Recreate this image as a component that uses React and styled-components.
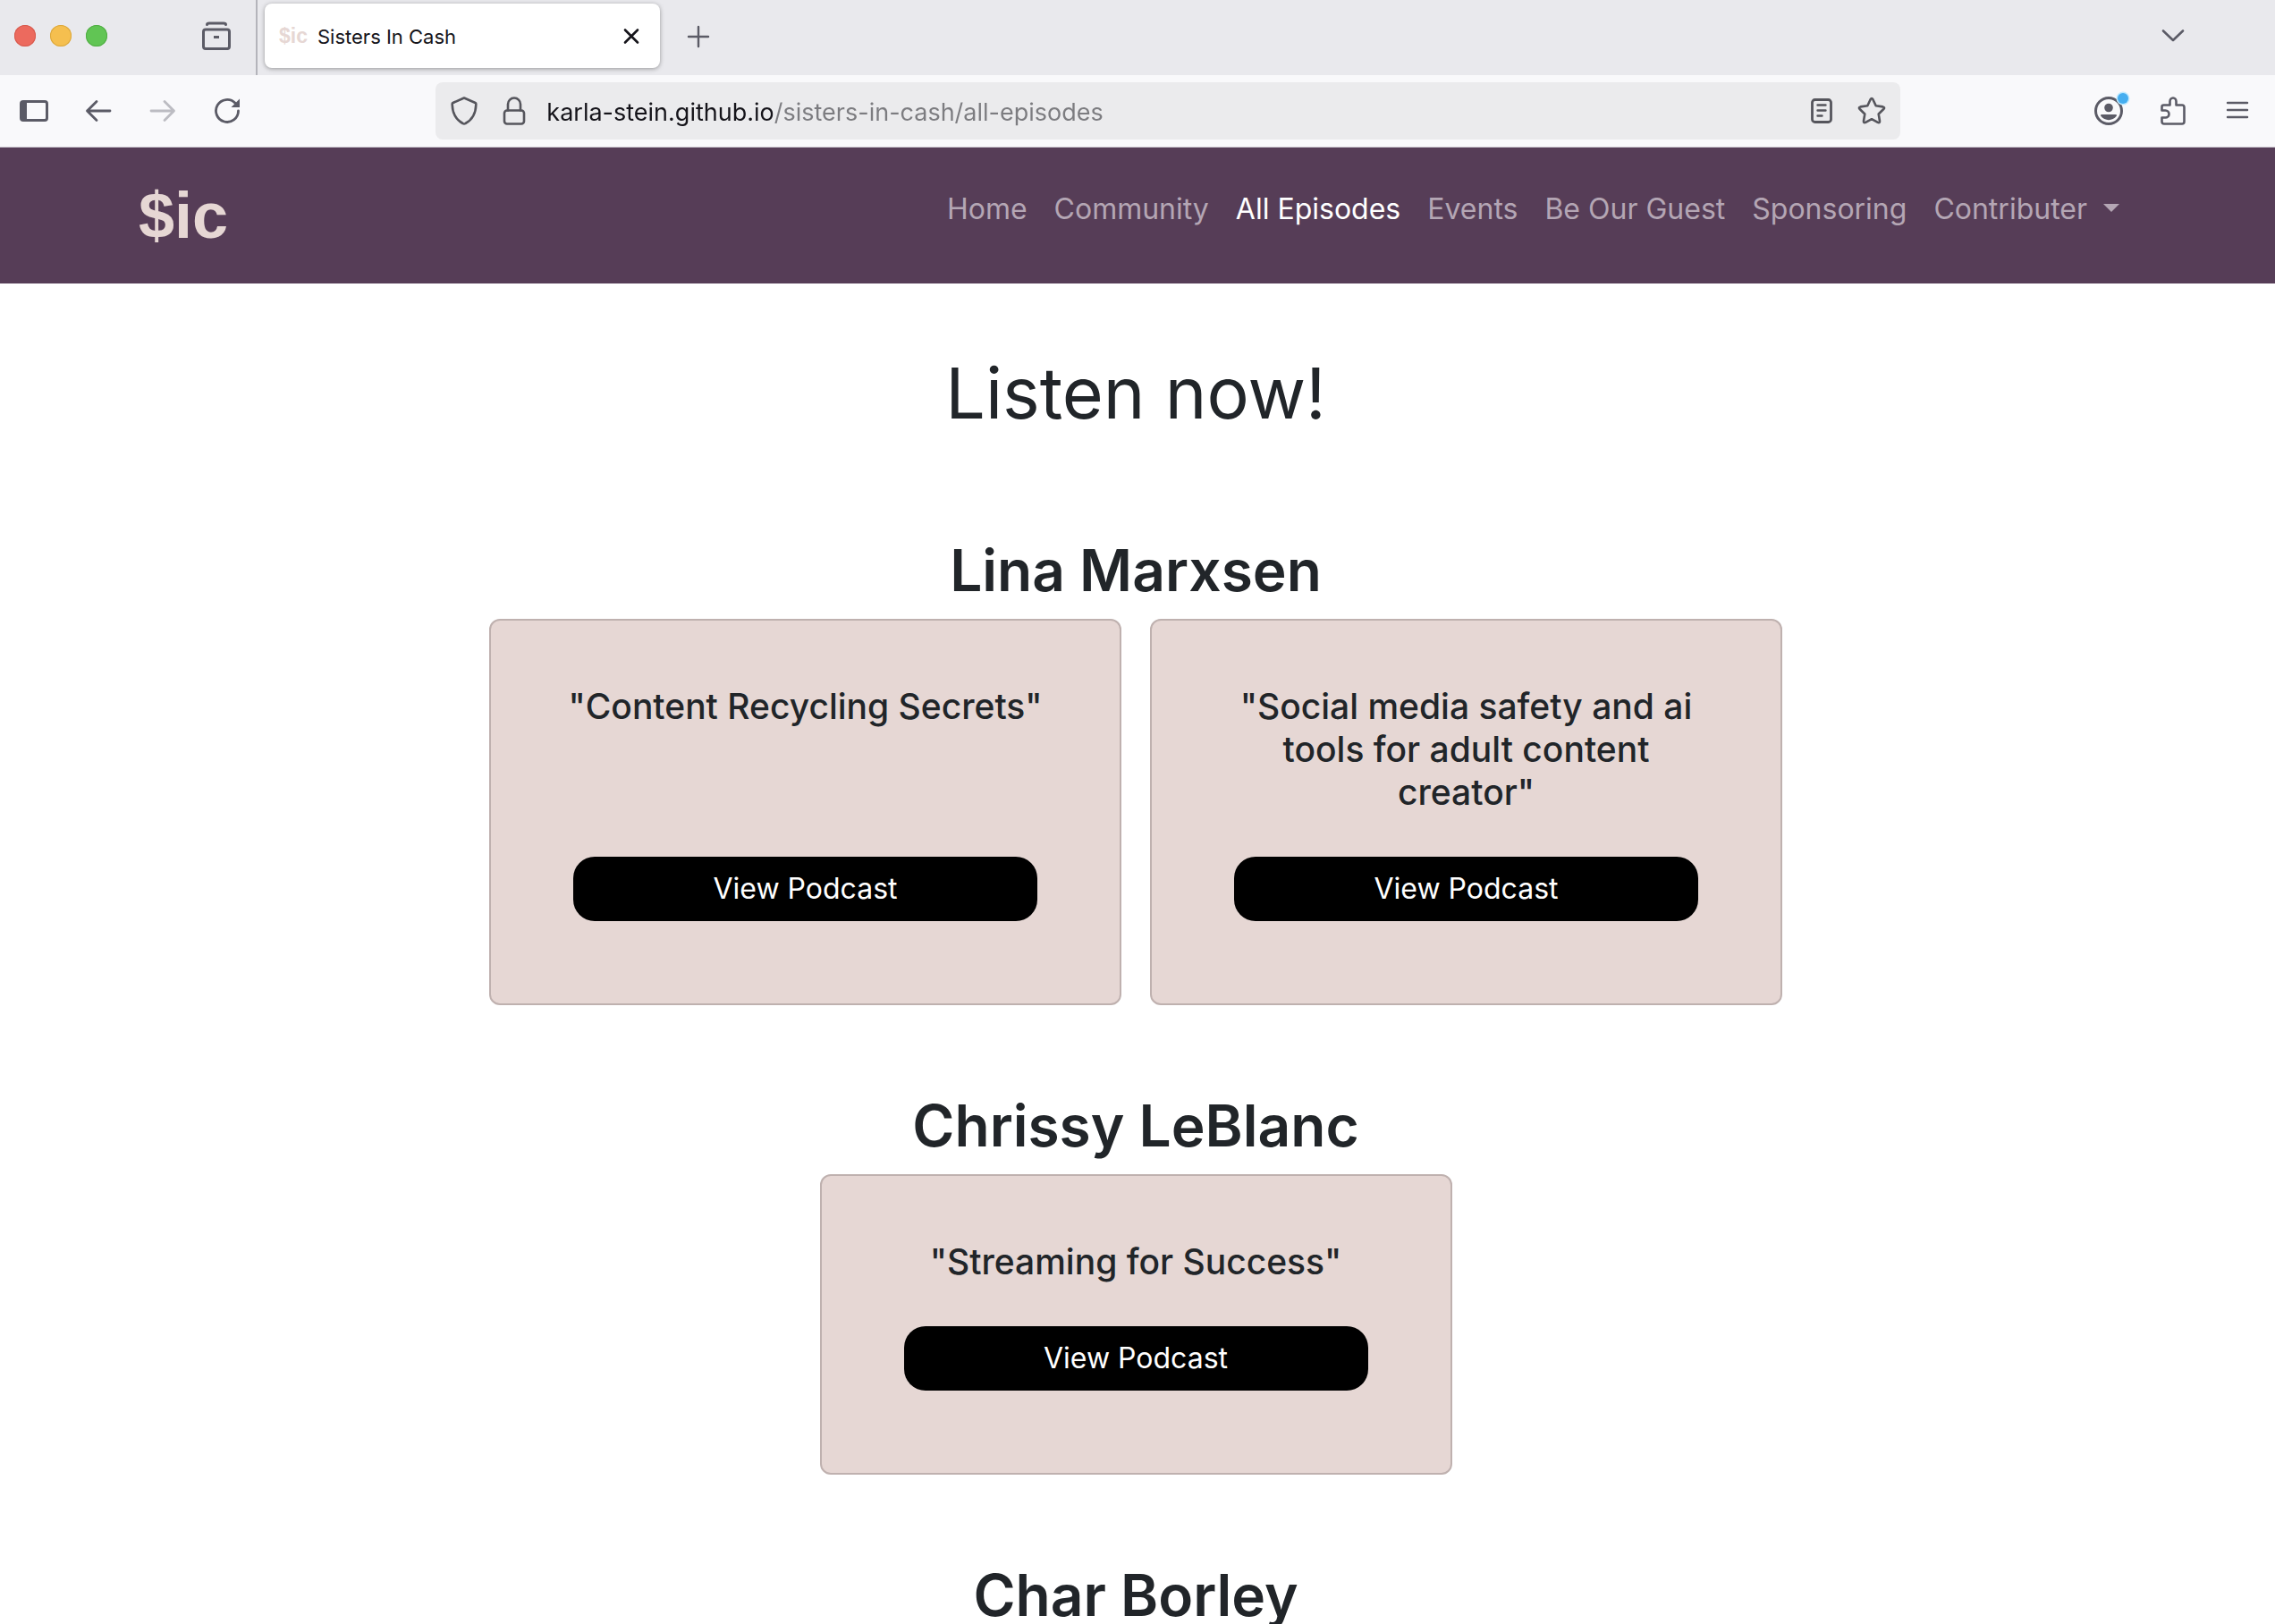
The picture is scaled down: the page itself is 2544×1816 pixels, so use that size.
import React from "react";
import styled, { createGlobalStyle, css } from "styled-components";

const ui = '"Inter", "Liberation Sans", sans-serif';

const GlobalStyle = createGlobalStyle`
  *, *::before, *::after { box-sizing: border-box; }
  html, body { margin: 0; }
  body { font-family: ${ui}; color: #212529; background: #fff; }
  h1, h2, h3, p, ul { margin: 0; padding: 0; font-weight: inherit; }
  button, input { font: inherit; color: inherit; border: 0; background: none; padding: 0; margin: 0; }
  a { color: inherit; text-decoration: none; }
  svg { display: block; }
`;

/* ---------- browser window ---------- */

const Window = styled.div`
  display: flex;
  flex-direction: column;
  height: 100vh;
  overflow: hidden;
`;

const TabStrip = styled.div`
  display: flex;
  align-items: center;
  height: 84px;
  flex: none;
  padding-bottom: 4px;
  background: #e9e9ed;
  color: #5b5b66;
`;

const TrafficLights = styled.div`
  display: flex;
  gap: 16px;
  padding: 0 106px 0 16px;
`;

const Light = styled.button`
  width: 24px;
  height: 24px;
  border-radius: 50%;
  background: ${(p) => p.$fill};
  box-shadow: inset 0 0 0 1px ${(p) => p.$edge};
`;

const IconButton = styled.button`
  display: flex;
  align-items: center;
  justify-content: center;
  flex: none;
  width: 32px;
  height: 32px;
  color: ${(p) => (p.$muted ? "#bcbcc2" : "#5b5b66")};
`;

const StripDivider = styled.div`
  width: 2px;
  align-self: stretch;
  margin: 0 8px -4px 28px;
  background: #b4b4bb;
`;

const Tab = styled.div`
  display: flex;
  align-items: center;
  width: 442px;
  height: 72px;
  padding: 0 16px;
  border-radius: 8px;
  background: #fff;
  box-shadow: 0 1px 5px rgba(0, 0, 0, 0.36);
  color: #15141a;
`;

const Favicon = styled.span`
  width: 43px;
  font: 700 23px/32px "Liberation Sans", Arial, sans-serif;
  color: #e6d7d4;
`;

const TabTitle = styled.span`
  flex: 1;
  padding-top: 2px;
  font-size: 22px;
  line-height: 32px;
`;

const TabClose = styled(IconButton)`
  color: #15141a;
`;

const NewTab = styled(IconButton)`
  margin: 0 auto 0 27px;
`;

const AllTabs = styled(IconButton)`
  margin-right: 98px;
`;

const Toolbar = styled.div`
  display: flex;
  align-items: center;
  justify-content: space-between;
  height: 81px;
  flex: none;
  padding: 0 26px 0 22px;
  background: #f9f9fb;
  border-bottom: 1px solid #ccc8d0;
`;

const ToolGroup = styled.div`
  display: flex;
  align-items: center;
  gap: ${(p) => (p.$tight ? "24px" : "40px")};
`;

const UrlBar = styled.form`
  display: flex;
  align-items: center;
  gap: 20px;
  width: 65.6%;
  height: 64px;
  padding: 0 16px;
  border-radius: 8px;
  background: #ebebed;

  ${IconButton} { color: #55555c; }
`;

const UrlInput = styled.input`
  flex: 1;
  min-width: 0;
  height: 48px;
  padding: 2px 0 0;
  outline: none;
  font-size: 27px;
  line-height: 46px;
  background: linear-gradient(to right, #15141a 253px, #7c7c80 253px);
  background-clip: text;
  -webkit-background-clip: text;
  -webkit-text-fill-color: transparent;
`;

const Viewport = styled.div`
  flex: 1;
  min-height: 0;
  overflow-y: auto;
  scrollbar-width: none;
  background: #fff;
`;

/* ---------- site ---------- */

const SiteHeader = styled.header`
  display: flex;
  justify-content: space-between;
  align-items: flex-start;
  height: 152px;
  padding: 36px 174px 0 155px;
  background: #563d57;
`;

const Brand = styled.a`
  font: 700 72px/80px "Liberation Sans", Arial, sans-serif;
  color: #e6d7d4;
`;

const NavList = styled.ul`
  display: flex;
  gap: 30px;
  padding-top: 9px;
  list-style: none;
`;

const navItem = css`
  display: flex;
  align-items: center;
  font-size: 32px;
  line-height: 48px;
  white-space: nowrap;
  color: ${(p) => (p.$active ? "#fff" : "#b4a6b4")};
`;

const NavLink = styled.a`${navItem}`;

const NavToggle = styled.button`
  ${navItem}

  &::after {
    content: "";
    margin-left: 18px;
    margin-bottom: 4px;
    border: 9px solid transparent;
    border-top-color: currentColor;
    border-bottom: 0;
  }
`;

const Episodes = styled.main`
  display: flex;
  flex-direction: column;
  align-items: center;
  padding: 74px 4px 96px 0;
`;

const PageTitle = styled.h1`
  margin-bottom: 16px;
  font-size: 79px;
  line-height: 96px;
`;

const Guest = styled.section`
  display: flex;
  flex-direction: column;
  align-items: center;
  width: 100%;
  padding-top: 96px;
`;

const GuestName = styled.h2`
  margin-bottom: 16px;
  font-size: 64px;
  font-weight: 600;
  line-height: 77px;
`;

const CardRow = styled.div`
  display: flex;
  justify-content: center;
  gap: 32px;
  width: 100%;
`;

const Card = styled.article`
  display: flex;
  flex-direction: column;
  flex: 0 1 707px;
  padding: 72px 76px 92px;
  border: 2px solid #bfb1af;
  border-radius: 12px;
  background: #e6d7d4;
  text-align: center;
`;

const CardTitle = styled.h3`
  flex: 1;
  margin-bottom: 48px;
  font-size: 39px;
  font-weight: 500;
  line-height: 48px;
`;

const PodcastLink = styled.a`
  margin: 0 16px;
  padding: 12px 24px;
  border-radius: 24px;
  background: #000;
  color: #fff;
  font-size: 32px;
  line-height: 48px;
`;

/* ---------- icons ---------- */

function Icon({ children, stroke = 3 }) {
  return (
    <svg width="32" height="32" viewBox="0 0 32 32" fill="none" stroke="currentColor"
      strokeWidth={stroke} strokeLinecap="round" strokeLinejoin="round" aria-hidden="true">
      {children}
    </svg>
  );
}

const ArchiveIcon = () => (
  <Icon>
    <path d="M5.500 3.500C5.500 2.500 6.500 2 8 2H24C25.500 2 26.500 2.500 26.500 3.500" />
    <rect x="1.500" y="9" width="29" height="21.500" rx="2.500" />
    <path d="M13 17.500H19" strokeLinecap="butt" />
  </Icon>
);
const CloseIcon = () => (
  <Icon stroke={2.6}><path d="M9 9.500L23 23.500M23 9.500L9 23.500" /></Icon>
);
const PlusIcon = () => (
  <Icon stroke={2.400}><path d="M16 6V28M5 17H27" /></Icon>
);
const ChevronIcon = () => (
  <Icon stroke={2.6}><path d="M5 10.500L16 21L27 10.500" /></Icon>
);
const SidebarIcon = () => (
  <Icon>
    <rect x="1.500" y="5.500" width="29" height="21" rx="2.500" />
    <path d="M2 6H8V26H2Z" fill="currentColor" stroke="none" />
  </Icon>
);
const BackIcon = () => (
  <Icon stroke={2.800}><path d="M29 16H3.500M14 5.500L3.500 16L14 26.500" /></Icon>
);
const ForwardIcon = () => (
  <Icon stroke={2.800}><path d="M3 16H28.500M18 5.500L28.500 16L18 26.500" /></Icon>
);
const ReloadIcon = () => (
  <Icon stroke={2.800}>
    <path d="M28.500 16A12.500 12.500 0 1 1 25 7.300" />
    <path d="M30 2.500V12H20.500Z" fill="currentColor" stroke="none" />
  </Icon>
);
const ShieldIcon = () => (
  <Icon stroke={2.600}>
    <path d="M16 1.500L28.500 7Q29.500 7.500 29.300 9C29 19 25 26 17.500 30Q16 31 14.500 30C7 26 3 19 2.700 9Q2.500 7.500 3.500 7Z" />
  </Icon>
);
const LockIcon = () => (
  <Icon stroke={2.600}>
    <rect x="5" y="15.500" width="22" height="15" rx="3" />
    <path d="M9 15.500V8.500A7 7 0 0 1 23 8.500V15.500" />
  </Icon>
);
const ReaderIcon = () => (
  <Icon stroke={2.800}>
    <rect x="5.500" y="3.500" width="21" height="25" rx="3" />
    <path d="M11.500 9.500H20.500M11.500 15.500H20.500M11.500 21.500H16.500" strokeWidth="2.400" />
  </Icon>
);
const StarIcon = () => (
  <Icon stroke={2.600}>
    <path d="M14.600 3.200Q16 0.800 17.400 3.200L20.700 10.300L28.500 11.400Q31.200 12 29.300 14L23.700 19.500L25 27.300Q25.200 30 22.800 28.900L16 25.200L9.200 28.900Q6.800 30 7 27.300L8.300 19.500L2.700 14Q0.800 12 3.500 11.400L11.300 10.300Z" />
  </Icon>
);
const AccountIcon = () => (
  <Icon>
    <circle cx="16" cy="16" r="14.500" />
    <circle cx="16" cy="12.500" r="4.800" fill="currentColor" stroke="none" />
    <path d="M8.500 20H23.500Q26 20 24.500 22A10.500 10 0 0 1 7.500 22Q6 20 8.500 20Z" fill="currentColor" stroke="none" />
    <circle cx="32" cy="2" r="7.500" fill="#bfeaff" stroke="none" />
    <circle cx="32" cy="2" r="6" fill="#45aef0" stroke="none" />
  </Icon>
);
const PuzzleIcon = () => (
  <Icon stroke={2.600}>
    <path d="M5.500 9.500H12.500V5.500A3.500 4 0 0 1 19.500 5.500V9.500H26Q28.500 9.500 28.500 12V28Q28.500 30.500 26 30.500H6Q3.500 30.500 3.500 28V23.500H7.500A4 4 0 0 0 7.500 15.500H3.500V11.500Q3.500 9.500 5.500 9.500Z" />
  </Icon>
);
const MenuIcon = () => (
  <Icon stroke={2.400}><path d="M5 7H27M5 15H27M5 23H27" /></Icon>
);

const Badged = styled(IconButton)`
  svg { overflow: visible; }
`;

/* ---------- content ---------- */

const links = ["Home", "Community", "All Episodes", "Events", "Be Our Guest", "Sponsoring"];

const guests = [
  {
    name: "Lina Marxsen",
    episodes: [
      '"Content Recycling Secrets"',
      '"Social media safety and ai tools for adult content creator"',
    ],
  },
  { name: "Chrissy LeBlanc", episodes: ['"Streaming for Success"'] },
  { name: "Char Borley", episodes: [] },
];

export default function App() {
  return (
    <>
      <GlobalStyle />
      <Window>
        <TabStrip>
          <TrafficLights>
            <Light aria-label="Close window" $fill="#ec6a5e" $edge="#d65a4e" />
            <Light aria-label="Minimize window" $fill="#f5bf4f" $edge="#dba73c" />
            <Light aria-label="Zoom window" $fill="#61c554" $edge="#51ad44" />
          </TrafficLights>
          <IconButton aria-label="Firefox View"><ArchiveIcon /></IconButton>
          <StripDivider />
          <Tab>
            <Favicon aria-hidden="true">$ic</Favicon>
            <TabTitle>Sisters In Cash</TabTitle>
            <TabClose aria-label="Close tab"><CloseIcon /></TabClose>
          </Tab>
          <NewTab aria-label="New tab"><PlusIcon /></NewTab>
          <AllTabs aria-label="List all tabs"><ChevronIcon /></AllTabs>
        </TabStrip>

        <Toolbar>
          <ToolGroup>
            <IconButton aria-label="Sidebars"><SidebarIcon /></IconButton>
            <IconButton aria-label="Back"><BackIcon /></IconButton>
            <IconButton aria-label="Forward" $muted><ForwardIcon /></IconButton>
            <IconButton aria-label="Reload"><ReloadIcon /></IconButton>
          </ToolGroup>
          <UrlBar onSubmit={(e) => e.preventDefault()}>
            <ToolGroup $tight>
              <IconButton type="button" aria-label="Tracking protection"><ShieldIcon /></IconButton>
              <IconButton type="button" aria-label="Site security"><LockIcon /></IconButton>
            </ToolGroup>
            <UrlInput
              aria-label="Address"
              defaultValue="karla-stein.github.io/sisters-in-cash/all-episodes"
              spellCheck={false}
            />
            <ToolGroup $tight>
              <IconButton type="button" aria-label="Reader view"><ReaderIcon /></IconButton>
              <IconButton type="button" aria-label="Bookmark"><StarIcon /></IconButton>
            </ToolGroup>
          </UrlBar>
          <ToolGroup>
            <Badged aria-label="Account"><AccountIcon /></Badged>
            <IconButton aria-label="Extensions"><PuzzleIcon /></IconButton>
            <IconButton aria-label="Menu"><MenuIcon /></IconButton>
          </ToolGroup>
        </Toolbar>

        <Viewport>
          <SiteHeader>
            <Brand href="#home">$ic</Brand>
            <nav>
              <NavList>
                {links.map((label) => (
                  <li key={label}>
                    <NavLink href={`#${label}`} $active={label === "All Episodes"}>{label}</NavLink>
                  </li>
                ))}
                <li>
                  <NavToggle type="button" aria-haspopup="menu">Contributer</NavToggle>
                </li>
              </NavList>
            </nav>
          </SiteHeader>

          <Episodes>
            <PageTitle>Listen now!</PageTitle>
            {guests.map((guest) => (
              <Guest key={guest.name}>
                <GuestName>{guest.name}</GuestName>
                <CardRow>
                  {guest.episodes.map((title) => (
                    <Card key={title}>
                      <CardTitle>{title}</CardTitle>
                      <PodcastLink href="#podcast">View Podcast</PodcastLink>
                    </Card>
                  ))}
                </CardRow>
              </Guest>
            ))}
          </Episodes>
        </Viewport>
      </Window>
    </>
  );
}
